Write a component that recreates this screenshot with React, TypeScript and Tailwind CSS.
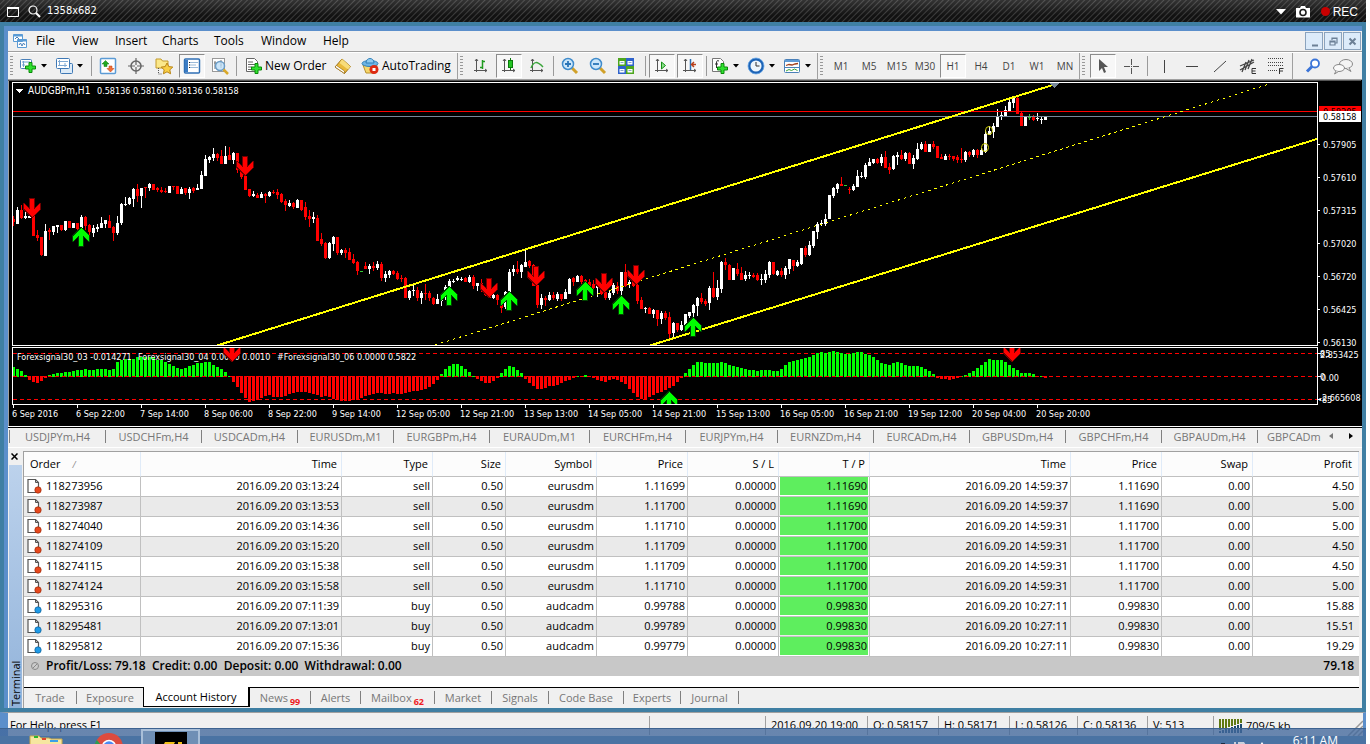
import React from "react";

type Kids = { children?: React.ReactNode };

/* ---------- chart data: [colour, high, body top, body bottom, low] ---------- */

const CANDLES = `
R216,219,222,226 W207,210,224,224 R205,210,218,219 W209,216,218,219 W212,216,218,218 R210,212,236,236 R230,235,238,241 R237,237,255,256
W224,231,256,256 R228,230,232,240 W226,226,232,235 W225,225,227,233 R225,225,230,231 W221,221,230,231 R221,221,228,228 W223,223,228,228
R223,223,229,230 W215,217,229,230 R216,217,226,230 R224,225,232,242 W225,228,233,237 W224,227,229,232 W217,223,228,228 W220,220,224,228
R215,221,228,228 R226,227,233,241 W216,223,233,235 W203,204,223,225 W197,204,205,206 W197,198,204,205 W188,189,199,207 R184,189,196,202
W188,188,196,208 R187,187,188,198 W183,184,188,191 R184,184,190,190 R187,188,190,192 R187,190,192,193 R188,191,192,193 W186,186,193,193
R186,186,187,190 R186,186,194,194 W187,189,194,194 R188,188,193,195 W187,189,193,199 R187,188,191,193 W184,188,190,190 W171,175,189,189
W155,159,176,176 W156,157,160,163 W148,154,158,161 R153,154,158,161 R150,156,164,164 W146,156,164,164 R147,155,160,160 W152,153,160,164
R153,153,170,173 R165,168,177,179 R175,176,190,190 R189,189,196,197 W191,194,196,197 R193,195,198,198 W192,194,198,198 R193,194,196,203
W191,192,196,197 R190,192,193,194 R189,192,195,199 R193,194,202,203 R199,201,205,211 W200,203,206,207 R202,203,207,209 W199,200,208,208
R200,200,210,211 R202,207,217,220 R210,216,219,227 W212,217,219,223 R215,218,241,241 R233,239,244,246 R242,243,258,259 W242,243,258,259
W236,237,244,251 R237,237,253,255 W249,250,253,255 R248,250,253,258 R248,252,260,260 R254,259,263,264 R261,262,271,275 G271,271,272,272
R262,266,269,269 W264,266,269,274 R262,266,268,271 W261,264,268,270 R262,264,278,281 W271,274,278,282 W270,271,275,278 R270,271,274,275
R271,273,279,280 R275,278,279,282 R277,278,298,298 W290,291,298,300 W283,290,291,296 R287,290,298,301 W291,293,298,304 R284,293,294,300
R291,293,298,301 R297,298,304,305 W294,299,304,304 W294,296,301,306 W285,287,297,300 W279,281,288,288 W279,281,282,283 W276,278,280,281
W277,279,280,281 R277,278,282,282 W275,277,282,283 R275,277,286,289 W283,283,286,291 R279,283,290,292 R288,289,295,296 R292,293,298,298
W294,295,298,299 R294,295,300,305 R298,299,308,313 W291,292,307,309 W269,272,300,300 W265,269,272,276 R261,269,272,274 W264,265,272,278
W250,262,267,267 R260,261,266,268 R264,265,286,286 R285,285,305,308 W294,298,305,309 R296,298,300,306 W292,295,300,301 R292,295,298,300
W292,294,299,301 R294,294,299,301 W289,292,299,299 W278,279,294,294 R277,278,282,286 W275,276,282,282 R275,276,282,284 R279,280,287,288
R279,282,286,290 R280,284,288,290 W283,284,288,297 R284,284,294,295 R289,292,298,300 W291,293,298,300 W283,285,293,295 R282,286,291,294
W272,272,291,297 R264,272,286,287 W280,282,284,288 R280,281,286,287 R283,285,301,304 R297,300,309,309 W307,308,309,313 R307,308,314,314
W309,310,314,318 R310,310,319,326 W311,313,319,324 R311,313,318,320 R312,317,334,338 W322,323,333,338 R323,323,330,332 W321,325,330,331
W314,314,325,326 W312,312,316,318 W304,305,313,325 W297,298,306,316 R293,298,302,304 R299,301,304,306 W286,288,303,310 R272,288,297,298
W280,288,297,300 W261,262,289,293 R258,262,265,270 R264,265,280,280 W268,268,280,280 R263,269,274,276 R267,273,280,280 W271,275,279,281
W272,275,276,279 R273,275,277,278 R273,275,280,281 W274,279,280,285 W270,274,280,283 W261,262,275,278 R262,262,274,275 W270,271,275,276
R268,271,275,277 W266,268,275,279 W259,259,269,274 R260,260,266,271 W260,262,266,267 W248,248,264,265 R246,248,255,257 W241,245,255,256
W231,231,246,248 W222,224,232,239 W220,223,224,226 W214,219,224,226 W195,195,219,219 W187,188,196,198 W183,184,189,193 R177,184,186,186
G185,185,186,186 R187,189,190,194 W184,186,190,191 W170,176,187,187 W172,176,177,178 W163,165,177,179 W158,162,166,166 W159,159,163,164
R158,159,163,164 W154,157,163,166 R151,157,168,168 R163,167,170,174 W155,156,169,170 W152,155,157,165 R150,155,159,160 W152,153,159,161
R152,153,164,164 W155,158,164,169 W143,149,159,160 W142,144,149,150 R141,144,152,152 W144,144,152,152 R141,144,147,149 R146,146,158,158
R154,157,159,159 W154,156,160,160 R154,156,157,160 R156,156,159,161 R155,157,160,163 R148,159,160,163 W151,152,160,162 R151,152,155,157
W149,150,155,157 R149,150,155,158 W148,150,155,155 W130,134,152,153 W126,131,135,135 W123,126,132,138 W109,116,127,127 W111,115,116,120
W106,110,116,116 W100,102,111,112 W96,98,103,108 R96,98,114,114 R112,113,126,126 W116,117,126,126 G114,117,118,120 R115,116,120,121
W113,118,119,121 W117,119,120,124 W116,116,120,120`
  .trim()
  .split(/\s+/)
  .map((s) => ({ c: s[0], v: s.slice(1).split(",").map(Number) }));

const BARS = [
  10, 8, 6, 2, -3, -5, -6, -4, -1, 2, 3, 4, 4, 5, 5, 6, 7, 7, 8, 7, 7, 8, 8, 8, 7, 8, 15, 17, 18, 18, 18, 20, 20, 20, 20, 20, 17, 17, 15,
  13, 11, 9, 8, 9, 11, 12, 14, 14, 15, 15, 12, 10, 8, 5, 1, -5, -10, -16, -21, -25, -24, -23, -21, -19, -18, -20, -20, -20, -19, -17, -16,
  -15, -15, -15, -16, -17, -18, -20, -19, -20, -22, -23, -24, -24, -24, -23, -22, -21, -19, -18, -17, -16, -16, -17, -17, -16, -17, -17,
  -16, -15, -14, -14, -13, -12, -10, -7, -3, 3, 8, 11, 13, 13, 11, 8, 5, 1, -2, -4, -6, -6, -4, -1, 4, 8, 11, 10, 7, 4, -2, -6, -9, -12,
  -12, -11, -9, -9, -8, -6, -4, -3, -1, 1, 1, 2, 1, -1, -3, -4, -5, -3, -2, -3, -5, -7, -12, -16, -20, -22, -23, -20, -18, -16, -15, -13,
  -11, -9, -5, -1, 4, 8, 12, 15, 15, 14, 14, 14, 14, 15, 14, 12, 11, 10, 9, 8, 7, 7, 6, 7, 7, 7, 6, 6, 8, 12, 15, 16, 17, 18, 19, 20, 22,
  24, 25, 24, 25, 26, 25, 24, 23, 23, 24, 25, 25, 23, 22, 20, 17, 14, 13, 12, 14, 15, 14, 12, 11, 11, 11, 10, 8, 6, 3, -1, -2, -2, -3, -2,
  -1, 1, 2, 4, 6, 9, 12, 15, 18, 17, 17, 17, 15, 12, 9, 7, 4, 4, 4, 3, 1, 1, -1,
];

const INK: Record<string, string> = { R: "#ff0000", W: "#ffffff", G: "#32cd32" };

const DATES = [
  "6 Sep 2016", "6 Sep 22:00", "7 Sep 14:00", "8 Sep 06:00", "8 Sep 22:00", "9 Sep 14:00", "12 Sep 05:00", "12 Sep 21:00", "13 Sep 13:00",
  "14 Sep 05:00", "14 Sep 21:00", "15 Sep 13:00", "16 Sep 05:00", "16 Sep 21:00", "19 Sep 12:00", "20 Sep 04:00", "20 Sep 20:00",
];
const PRICES = ["0.57905", "0.57610", "0.57315", "0.57020", "0.56720", "0.56425", "0.56130"];

function Arrow({ x, y, up }: { x: number; y: number; up?: boolean }) {
  const d = "M0 0L8 8V13L2 7.500V18H-2V7.500L-8 13V8Z";
  return (
    <path
      d={d}
      transform={up ? `translate(${x} ${y})` : `translate(${x} ${y + 18}) scale(1 -1)`}
      fill={up ? "#00ff00" : "#ff0000"}
      stroke={up ? "#004000" : "#700000"}
      strokeWidth="1.500"
      paintOrder="stroke"
    />
  );
}

function Chart() {
  return (
    <svg width="1353" height="346" viewBox="8 80 1353 346" shapeRendering="crispEdges" className="block shrink-0" fontFamily="'DejaVu Sans Condensed','DejaVu Sans',sans-serif" fontSize="9" fill="#fff" role="img" aria-label="AUDGBPm H1 price chart">
      <defs>
        <clipPath id="main"><rect x="13" y="83" width="1304" height="262" /></clipPath>
        <clipPath id="sub"><rect x="13" y="348" width="1304" height="56" /></clipPath>
      </defs>
      <rect x="8" y="80" width="1353" height="346" fill="#000" />
      <rect x="8" y="80" width="1" height="346" fill="#a0a0a0" />
      <rect x="8" y="80" width="1353" height="1" fill="#555" />
      <g clipPath="url(#main)">
        {CANDLES.map(({ c, v }, i) => {
          const x = 13 + 4 * i;
          return (
            <g key={i} fill={INK[c]}>
              <rect x={x} y={v[0]} width="1" height={Math.max(1, v[3] - v[0])} />
              <rect x={x - 1} y={v[1]} width="3" height={Math.max(1, v[2] - v[1])} />
            </g>
          );
        })}
        <rect x="13" y="111" width="1304" height="1" fill="#ff0000" />
        <rect x="13" y="116" width="1304" height="1" fill="#778899" />
        <path d="M217 345.500L1056 84" stroke="#ffff00" strokeWidth="2" />
        <path d="M650 345.500L1317 139" stroke="#ffff00" strokeWidth="2" />
        <path d="M435 345L1271 83.500" stroke="#ffff00" strokeWidth="1" strokeDasharray="2.500 3.800" />
        <path d="M1049 83h11l-5.500 5z" fill="#778899" />
        <g fill="none" stroke="#c8c800" strokeWidth="1" shapeRendering="auto">
          <ellipse cx="989" cy="130.500" rx="3.500" ry="4" />
          <ellipse cx="985" cy="147.500" rx="3.500" ry="4" />
        </g>
        <Arrow x={32} y={199} />
        <Arrow x={245} y={157} />
        <Arrow x={489} y={279} />
        <Arrow x={536} y={267} />
        <Arrow x={604} y={274} />
        <Arrow x={636} y={266} />
        <Arrow x={81} y={228} up />
        <Arrow x={449} y={287} up />
        <Arrow x={509} y={292} up />
        <Arrow x={585} y={282} up />
        <Arrow x={621} y={296} up />
        <Arrow x={693} y={318} up />
      </g>
      <g clipPath="url(#sub)">
        <path d="M13 353.500H1317M13 399.500H1317" stroke="#ff0000" strokeDasharray="4 3" />
        {BARS.map((v, i) => (
          <rect key={i} x={12 + 4 * i} y={v > 0 ? 377 - v : 376} width="3" height={Math.abs(v) + (v > 0 ? 0 : 1)} fill={v > 0 ? "#00ff00" : "#ff0000"} />
        ))}
        <path d="M13 376.500H1317" stroke="#ff0000" strokeDasharray="4 3" />
        <text x="17" y="360">Forexsignal30_03 -0.014271</text>
        <text x="138" y="360">Forexsignal30_04 0.0000 0.0010</text>
        <text x="277" y="360">#Forexsignal30_06 0.0000 0.5822</text>
        <Arrow x={232} y={343} />
        <Arrow x={1012} y={343} />
        <Arrow x={669} y={392} up />
      </g>
      <path d="M12.500 82.500H1317.500V345.500H12.500ZM12.500 347.500H1317.500V404.500H12.500Z" fill="none" stroke="#fff" />
      <path d="M16 89h7l-3.500 4z" />
      <text x="28" y="94" fontSize="10">AUDGBPm,H1</text>
      <text x="97" y="94">0.58136 0.58160 0.58136 0.58158</text>
      {PRICES.map((p, i) => (
        <g key={p}>
          <rect x="1318" y={144 + 33 * i} width="2" height="1" />
          <text x="1323" y={148 + 33 * i}>{p}</text>
        </g>
      ))}
      <rect x="1319" y="106" width="42" height="6" fill="#ff0000" />
      <text x="1323" y="115" fill="#000">0.58205</text>
      <rect x="1319" y="111" width="42" height="11" />
      <text x="1323" y="120" fill="#000">0.58158</text>
      <path d="M1318 353.500h3M1318 376.500h3M1318 399.500h3" stroke="#fff" />
      <text x="1320" y="357">85</text>
      <text x="1320" y="358">2.853425</text>
      <text x="1320" y="380">0</text>
      <text x="1321" y="381">0.00</text>
      <text x="1319" y="401">-2.665608</text>
      <text x="1319" y="403">-85</text>
      {DATES.map((d, i) => (
        <g key={d}>
          <rect x={13 + 64 * i} y="405" width="1" height="3" />
          <text x={12 + 64 * i} y="417">{d}</text>
        </g>
      ))}
    </svg>
  );
}

/* ---------- toolbar ---------- */

function Icon({ children, w = 18 }: Kids & { w?: number }) {
  return <svg width={w} height="18" viewBox={`0 0 ${w} 18`} fill="none" className="shrink-0" aria-hidden="true">{children}</svg>;
}
const Plus = ({ x = 6, y = 7 }: { x?: number; y?: number }) => (
  <path transform={`translate(${x} ${y})`} d="M4 .5h3v3.500h3.500v3H7v3.500H4V7H.5V4H4z" fill="#2fe02f" stroke="#0a8a0a" />
);
const Axes = () => <path d="M4.500 2v13M2 13.500h13M3 4l1.500-2L6 4M13 12l2 1.500-2 1.500" stroke="#555" />;

function Tool({ label, on, children }: Kids & { label: string; on?: boolean }) {
  return (
    <button
      aria-label={label}
      className={
        on
          ? "mx-px flex h-6 w-[26px] shrink-0 items-center justify-center border border-t-[#8c8c8c] border-l-[#8c8c8c] border-r-white border-b-white bg-[#f7f7f7] text-[10px] text-[#444]"
          : "flex h-6 w-7 shrink-0 items-center justify-center text-[10px] text-[#444]"
      }
    >
      {children}
    </button>
  );
}
function Combo({ label, children }: Kids & { label: string }) {
  return (
    <button aria-label={label} className="flex h-6 w-9 shrink-0 items-center gap-1 pl-[2px]">
      {children}
      <svg width="6" height="4" viewBox="0 0 6 4" aria-hidden="true"><path d="M0 0h6L3 3.500z" fill="#000" /></svg>
    </button>
  );
}
const Sep = () => <div className="mx-[2px] h-5 w-px shrink-0 bg-[#9a9a9a]" />;
const Grip = () => (
  <div className="ml-[2px] mr-1 h-5 w-[3px] shrink-0 bg-[repeating-linear-gradient(180deg,#999_0px,#999_1px,#f0f0f0_1px,#f0f0f0_3px)]" />
);
const Band = ({ children }: Kids) => <div className="flex h-full shrink-0 items-center border-l border-[#a0a0a0] first:border-l-0">{children}</div>;

function Toolbar() {
  return (
    <div className="flex h-[27px] items-center overflow-hidden border-t border-white bg-[#f0f0f0] text-[12px] text-black">
      <Band>
        <Grip />
        <Combo label="New chart">
          <Icon><rect x="1.500" y="2.500" width="11" height="9" rx="1" fill="#fff" stroke="#4a80b8" /><path d="M3 5h8M4.500 4v6M3 8h3" stroke="#6fa0d0" /><Plus x={6} y={5} /></Icon>
        </Combo>
        <Combo label="Profiles">
          <Icon><rect x="5.500" y="6.500" width="12" height="10" rx="1" fill="#dcebf8" stroke="#3f78b5" /><rect x="1.500" y="1.500" width="13" height="10" rx="1" fill="#fff" stroke="#3f78b5" /><path d="M3 4.500h10M4.500 3v6M3 8.500h9M10 10V6" stroke="#7fa9d3" /></Icon>
        </Combo>
        <Sep />
        <Tool label="Market Watch">
          <Icon><rect x="1.500" y="1.500" width="15" height="15" rx="1" fill="#fff" stroke="#5b9bd5" strokeWidth="1.500" /><path d="M6.500 3.500L10 7H8v2.500H5V7H3z" fill="#22a822" stroke="#0f7a0f" strokeWidth=".5" /><path d="M11.500 15L8 11.500h2V9h3v2.500h2z" fill="#f0703a" stroke="#c03c0c" strokeWidth=".5" /></Icon>
        </Tool>
        <Tool label="Data Window">
          <Icon><circle cx="9" cy="9" r="5" stroke="#666" strokeWidth="1.500" /><path d="M9 1v7M9 10v7M1 9h7M10 9h7" stroke="#666" strokeWidth="1.200" /></Icon>
        </Tool>
        <Tool label="Favourites">
          <Icon><path d="M1 2h5l1.500 2H13v7H1z" fill="#fbe88a" stroke="#c39a2b" /><path d="M3.500 11v6h3" stroke="#555" strokeDasharray="1 1" /><path d="M12 6l1.800 3.600 4 .5-3 2.700.8 4-3.600-2-3.600 2 .8-4-3-2.700 4-.5z" fill="#f9cf45" stroke="#b98516" /></Icon>
        </Tool>
        <Tool label="Navigator" on>
          <Icon><rect x="1.500" y="2" width="15" height="14" rx="1" fill="#fff" stroke="#2f6fb5" strokeWidth="1.500" /><path d="M3.500 3v12" stroke="#3a7cc4" strokeWidth="3" /><path d="M7 5.500h8M7 8h6M7 10.500h8" stroke="#9bbad8" /><path d="M6 5.500h1M6 8h1M6 10.500h1" stroke="#222" /></Icon>
        </Tool>
        <Tool label="Strategy Tester">
          <Icon><rect x="1.500" y="1.500" width="12" height="13" fill="#fff" stroke="#999" /><path d="M4 4v8M10 3v8M3 6h2M9 8h2" stroke="#777" /><circle cx="9" cy="9" r="4.500" fill="#bfe0f7" fillOpacity=".8" stroke="#6b9cc6" strokeWidth="1.500" /><path d="M12.500 12.500L17 17" stroke="#d9a92a" strokeWidth="2.500" /></Icon>
        </Tool>
        <Sep />
        <button className="flex h-6 w-[90px] shrink-0 items-center gap-[2px] whitespace-nowrap pl-[6px]">
          <Icon><path d="M1.500 1.500h8l3 3v10h-11z" fill="#fff" stroke="#666" /><path d="M3 5h5M3 7.500h7M3 10h4M3 12.500h3" stroke="#666" /><Plus x={6} y={6} /></Icon>
          New Order
        </button>
        <Tool label="MetaEditor">
          <Icon><path d="M8 2l8.500 7.500-6 7L1 10z" fill="#e9b93a" stroke="#9c6f12" /><path d="M8 2l8.500 7.500-2.500 3L5.500 6z" fill="#f8dc7a" /><path d="M1 10l9.500 6.500V14L2.500 8.500z" fill="#fff" stroke="#9c6f12" strokeWidth=".7" /></Icon>
        </Tool>
        <button className="flex h-6 w-[100px] shrink-0 items-center gap-[3px] whitespace-nowrap pl-1">
          <Icon><path d="M2 8h14l-3 8H5z" fill="#f5d76b" stroke="#b8902c" /><ellipse cx="9" cy="6.500" rx="8" ry="3" fill="#6db4e4" stroke="#2f7fb8" /><path d="M5 6c0-6 8-6 8 0z" fill="#8fcbf0" stroke="#2f7fb8" /><circle cx="13" cy="12.500" r="4.500" fill="#dd2a12" /><rect x="11.500" y="11" width="3" height="3" fill="#fff" /></Icon>
          AutoTrading
        </button>
      </Band>
      <Band>
        <Grip />
        <Tool label="Bar chart"><Icon><Axes /><path d="M10.500 3v9M8 10.500h2.500M10.500 4.500H13" stroke="#1f9a1f" strokeWidth="1.500" /></Icon></Tool>
        <Tool label="Candlesticks" on><Icon><Axes /><path d="M10.500 1v12" stroke="#0b7a0b" /><rect x="8.500" y="3.500" width="4" height="7" fill="#23c423" stroke="#0b7a0b" /></Icon></Tool>
        <Tool label="Line chart"><Icon><Axes /><path d="M3 11C6 4 9 4 15 10" stroke="#3aa53a" strokeWidth="1.500" /></Icon></Tool>
        <Sep />
        <Tool label="Zoom in"><Icon><path d="M11 11l5 5" stroke="#d1a12a" strokeWidth="3" /><circle cx="7" cy="7" r="5.500" fill="#cde7fa" stroke="#3f8bcb" strokeWidth="1.500" /><path d="M7 4v6M4 7h6" stroke="#2a75b8" strokeWidth="1.800" /></Icon></Tool>
        <Tool label="Zoom out"><Icon><path d="M11 11l5 5" stroke="#d1a12a" strokeWidth="3" /><circle cx="7" cy="7" r="5.500" fill="#cde7fa" stroke="#3f8bcb" strokeWidth="1.500" /><path d="M4 7h6" stroke="#2a75b8" strokeWidth="1.800" /></Icon></Tool>
        <Tool label="Tile windows"><Icon><path d="M1 1h8v8H1zM9 9h8v8H9z" fill="#4da61e" /><path d="M9 1h8v8H9zM1 9h8v8H1z" fill="#2f63cc" /><path d="M2.500 4h5v3.500h-5zM10.500 12h5v3.500h-5zM10.500 4h5v3.500h-5zM2.500 12h5v3.500h-5z" fill="#fff" /><path d="M3.500 5.500h3M11.500 5.500h3M3.500 13.500h3M11.500 13.500h3" stroke="#8aa8c8" /></Icon></Tool>
        <div className="w-[3px]" />
        <Sep />
        <Tool label="Auto scroll" on><Icon><Axes /><path d="M8.500 5v7l4-3.500z" fill="#8be08b" stroke="#179017" /></Icon></Tool>
        <Tool label="Chart shift" on><Icon><Axes /><path d="M9.500 2v11" stroke="#2a6fb0" strokeWidth="1.500" /><path d="M15 7.500h-4M13 5l-2.500 2.500L13 10" stroke="#b8401a" strokeWidth="1.500" /></Icon></Tool>
        <Sep />
        <Combo label="Indicators"><Icon><path d="M1.500 1.500h8l3 3v10h-11z" fill="#fff" stroke="#777" /><path d="M8 4c-2-1-2.500 0-2.500 2v5M4 7h3" stroke="#333" /><Plus x={6} y={6} /></Icon></Combo>
        <Combo label="Periods"><Icon><circle cx="9" cy="9" r="6.800" fill="#eef6fd" stroke="#1d63b5" strokeWidth="2.500" /><circle cx="9" cy="9" r="8" stroke="#6aa8e8" strokeWidth=".8" /><path d="M9 5v4h3.500" stroke="#333" /></Icon></Combo>
        <Combo label="Templates"><Icon><rect x="1.500" y="2.500" width="15" height="13" rx="1" fill="#fff" stroke="#4a80b8" /><path d="M2 4h14" stroke="#5f9bd6" strokeWidth="2" /><path d="M3 8.500l3-1 3 .5 3-1 3-.5" stroke="#a3401c" strokeWidth="1.300" /><path d="M2 10.500h14" stroke="#4a80b8" /><path d="M3 14l3-1.500 2.500 1 3-1.500 3 1.500" stroke="#3aa53a" /></Icon></Combo>
      </Band>
      <Band>
        <Grip />
        {["M1", "M5", "M15", "M30", "H1", "H4", "D1", "W1", "MN"].map((t) => (
          <Tool key={t} label={t} on={t === "H1"}>{t}</Tool>
        ))}
      </Band>
      <Band>
        <Grip />
        <Tool label="Cursor" on><Icon><path d="M5 2v12l3-3 2 5 2-1-2-5h4z" fill="#555" /></Icon></Tool>
        <Tool label="Crosshair"><Icon><path d="M9.500 2v6M9.500 11v6M2 9.500h6M11 9.500h6M9.500 9v1" stroke="#555" /></Icon></Tool>
        <Sep />
        <Tool label="Vertical line"><Icon><path d="M9.500 3v13" stroke="#444" /></Icon></Tool>
        <Tool label="Horizontal line"><Icon><path d="M3 9.500h12" stroke="#444" /></Icon></Tool>
        <Tool label="Trendline"><Icon><path d="M3 15L15 4" stroke="#444" /></Icon></Tool>
        <Tool label="Equidistant channel"><Icon><path d="M1 13L15 5M1 9l14-6M3 15L7 5M6 13l4-10M9 12l4-10" stroke="#444" strokeWidth="1.300" /><path d="M17 11.500h-4v5h4M13 14h3.500" stroke="#333" /></Icon></Tool>
        <Tool label="Fibonacci retracement"><Icon><path d="M1 1.500h15M1 5.500h15M1 8.500h15M1 13.500h10" stroke="#444" strokeDasharray="1 1" /><path d="M16.500 11.500h-4v5.500M12.500 14h3.500" stroke="#333" /></Icon></Tool>
        <div className="w-[2px]" />
      </Band>
      <Band>
        <div className="w-[6px]" />
        <Tool label="Search"><Icon><circle cx="11" cy="6.500" r="4" fill="#fff" stroke="#3a74d8" strokeWidth="1.800" /><path d="M8 9.500l-5 5" stroke="#3a74d8" strokeWidth="3" /></Icon></Tool>
        <button aria-label="Messages" className="flex h-6 w-8 items-center justify-center">
          <Icon w={22}><ellipse cx="14" cy="7" rx="6.500" ry="4.500" fill="#f4f4f4" stroke="#888" /><path d="M17 11l2 3.500-5-3" fill="#f4f4f4" stroke="#888" /><ellipse cx="7" cy="11" rx="5.500" ry="3.500" fill="#fafafa" stroke="#888" /><path d="M4 14l-1.500 3 4-2.500" fill="#fafafa" stroke="#888" /></Icon>
        </button>
      </Band>
    </div>
  );
}

/* ---------- terminal ---------- */

const HEAD = ["Order", "Time", "Type", "Size", "Symbol", "Price", "S / L", "T / P", "Time", "Price", "Swap", "Profit"];
const ROWS = [
  ["118273956", "2016.09.20 03:13:24", "sell", "0.50", "eurusdm", "1.11699", "0.00000", "1.11690", "2016.09.20 14:59:37", "1.11690", "0.00", "4.50"],
  ["118273987", "2016.09.20 03:13:53", "sell", "0.50", "eurusdm", "1.11700", "0.00000", "1.11690", "2016.09.20 14:59:37", "1.11690", "0.00", "5.00"],
  ["118274040", "2016.09.20 03:14:36", "sell", "0.50", "eurusdm", "1.11710", "0.00000", "1.11700", "2016.09.20 14:59:31", "1.11700", "0.00", "5.00"],
  ["118274109", "2016.09.20 03:15:20", "sell", "0.50", "eurusdm", "1.11709", "0.00000", "1.11700", "2016.09.20 14:59:31", "1.11700", "0.00", "4.50"],
  ["118274115", "2016.09.20 03:15:38", "sell", "0.50", "eurusdm", "1.11709", "0.00000", "1.11700", "2016.09.20 14:59:31", "1.11700", "0.00", "4.50"],
  ["118274124", "2016.09.20 03:15:58", "sell", "0.50", "eurusdm", "1.11710", "0.00000", "1.11700", "2016.09.20 14:59:31", "1.11700", "0.00", "5.00"],
  ["118295316", "2016.09.20 07:11:39", "buy", "0.50", "audcadm", "0.99788", "0.00000", "0.99830", "2016.09.20 10:27:11", "0.99830", "0.00", "15.88"],
  ["118295481", "2016.09.20 07:13:01", "buy", "0.50", "audcadm", "0.99789", "0.00000", "0.99830", "2016.09.20 10:27:11", "0.99830", "0.00", "15.51"],
  ["118295812", "2016.09.20 07:15:36", "buy", "0.50", "audcadm", "0.99779", "0.00000", "0.99830", "2016.09.20 10:27:11", "0.99830", "0.00", "19.29"],
];
const COLS = ["w-[117px]", "w-[201px]", "w-[91px]", "w-[73px]", "w-[91px]", "w-[91px]", "w-[91px]", "w-[91px]", "w-[201px]", "w-[91px]", "w-[91px]", ""];

function History() {
  return (
    <table className="w-full table-fixed border-separate border-spacing-0 border-t border-[#a0a0a0] bg-white text-right text-[11px] leading-[18px]">
      <colgroup>{COLS.map((c, i) => <col key={i} className={c} />)}</colgroup>
      <thead>
        <tr className="h-[25px] text-[11px]">
          {HEAD.map((h, i) => (
            <th key={i} className={"border-b border-r border-b-[#c0c0c0] border-r-[#e0ebf8] bg-[#fcfcfc] p-0 font-normal " + (i === 0 ? "pl-[6px] text-left" : i === 11 ? "pr-[6px]" : "pr-1")}>
              {h}
              {i === 0 && <span className="ml-3 text-[9px] italic text-[#888]">/</span>}
            </th>
          ))}
        </tr>
      </thead>
      <tbody>
        {ROWS.map((r) => (
          <tr key={r[0]} className="h-5 even:bg-[#eaeaea]">
            {r.map((v, i) => (
              <td key={i} className="border-b border-r border-[#c0c0c0] p-0 pb-px last:border-r-0">
                {i === 0 ? (
                  <span className="flex items-center gap-1 pl-[3px]">
                    <svg width="15" height="16" viewBox="0 0 15 16" fill="none" aria-hidden="true">
                      <path d="M1 1.500h7.500l3 3v10H1z" fill="#fff" stroke="#555" strokeWidth="1.200" />
                      <path d="M8.500 1.500v3h3" stroke="#555" />
                      <circle cx="11" cy="12" r="3.200" className={r[2] === "sell" ? "fill-[#e8481c] stroke-[#9c2a08]" : "fill-[#1f9be8] stroke-[#0d5f96]"} strokeWidth=".7" />
                    </svg>
                    {v}
                  </span>
                ) : i === 7 ? (
                  <span className="mx-px block bg-[#5eee5e] pr-px">{v}</span>
                ) : (
                  <span className={i === 11 ? "block pr-[5px]" : "block pr-[2px]"}>{v}</span>
                )}
              </td>
            ))}
          </tr>
        ))}
      </tbody>
      <tfoot>
        <tr className="h-[19px] bg-[#c8c8c8] text-[12px] font-semibold leading-[18px]">
          <td colSpan={11} className="p-0 pb-px text-left">
            <span className="flex items-center gap-[6px] whitespace-pre pl-[6px]">
              <svg width="10" height="10" viewBox="0 0 10 10" aria-hidden="true"><circle cx="5" cy="5" r="3.500" fill="#ccc" stroke="#888" /><path d="M3 7l4-4" stroke="#888" /></svg>
              {"Profit/Loss: 79.18  Credit: 0.00  Deposit: 0.00  Withdrawal: 0.00"}
            </span>
          </td>
          <td className="p-0 pb-px pr-[5px]">79.18</td>
        </tr>
      </tfoot>
    </table>
  );
}

const TABS: [string, string, string?][] = [
  ["Trade", "w-[53px]"], ["Exposure", "w-[66px]"], ["Account History", "w-[106px]"], ["News", "w-[62px]", "99"], ["Alerts", "w-[50px]"], ["Mailbox", "w-[74px]", "62"],
  ["Market", "w-[57px]"], ["Signals", "w-[57px]"], ["Code Base", "w-[75px]"], ["Experts", "w-[57px]"], ["Journal", "w-[58px]"],
];

const SYMBOLS: [string, string][] = [
  ["USDJPYm,H4", "w-[97px]"], ["USDCHFm,H4", "w-24"], ["USDCADm,H4", "w-24"], ["EURUSDm,M1", "w-24"], ["EURGBPm,H4", "w-24"], ["EURAUDm,M1", "w-[100px]"],
  ["EURCHFm,H4", "w-24"], ["EURJPYm,H4", "w-[92px]"], ["EURNZDm,H4", "w-24"], ["EURCADm,H4", "w-24"], ["GBPUSDm,H4", "w-24"], ["GBPCHFm,H4", "w-24"], ["GBPAUDm,H4", "w-24"],
];

const MENU: [string, string][] = [
  ["File", "w-9"], ["View", "w-[43px]"], ["Insert", "w-[47px]"], ["Charts", "w-[52px]"], ["Tools", "w-[47px]"], ["Window", "w-[62px]"], ["Help", "w-9"],
];

const STATUS: [string, string][] = [
  ["", "w-[116px]"], ["2016.09.20 19:00", "w-[102px]"], ["O: 0.58157", "w-[71px]"], ["H: 0.58171", "w-[71px]"], ["L: 0.58126", "w-[68px]"], ["C: 0.58136", "w-[70px]"], ["V: 513", "w-[66px]"],
];

export default function App() {
  return (
    <div className="h-screen overflow-hidden bg-white pr-1 font-['Open_Sans','Noto_Sans',sans-serif] text-[11px] text-black">
      <div className="relative flex h-full flex-col overflow-hidden">
        <header className="flex h-[22px] shrink-0 items-center bg-[linear-gradient(180deg,rgba(255,255,255,.14),rgba(255,255,255,0)_70%),repeating-linear-gradient(135deg,#121212_0px,#121212_2px,#3a3a3a_3px,#121212_4px)] pl-[7px] pr-2 pt-px text-[12px] text-white">
          <svg width="12" height="10" viewBox="0 0 12 10" fill="none" aria-hidden="true"><path d="M.5 1h11v8.500H.5z" stroke="#fff" /><path d="M0 1h12" stroke="#fff" strokeWidth="2" /></svg>
          <svg className="ml-[9px]" width="13" height="13" viewBox="0 0 13 13" fill="none" aria-hidden="true"><circle cx="5" cy="5" r="4" stroke="#fff" strokeWidth="1.200" /><path d="M8 8l4 4" stroke="#fff" strokeWidth="2.200" /></svg>
          <span className="ml-[6px] font-['DejaVu_Sans_Condensed',sans-serif] text-[11px]">1358x682</span>
          <span className="flex-1" />
          <svg width="10" height="6" viewBox="0 0 10 6" aria-hidden="true"><path d="M0 0h10L5 5.500z" fill="#fff" /></svg>
          <svg className="ml-[10px]" width="14" height="12" viewBox="0 0 14 12" aria-hidden="true"><path d="M0 2h4l1-2h4l1 2h4v9.500H0z" fill="#fff" /><circle cx="7" cy="6.500" r="3" fill="#fff" stroke="#1c1c1c" strokeWidth="1.600" /></svg>
          <span className="ml-[11px] h-[9px] w-[9px] rounded-full bg-[#c80000]" />
          <span className="ml-[3px] font-['Liberation_Sans',sans-serif] text-[12px]">REC</span>
        </header>

        <div className="flex min-h-0 flex-1 flex-col border-4 border-[#3f7fa3] bg-[#5b8fcb] pl-1 pt-[5px]">
          <nav className="flex h-5 shrink-0 items-center bg-[#f0f0f0] pl-[5px] text-[12px]">
            <svg width="14" height="14" viewBox="0 0 14 14" fill="none" aria-hidden="true"><path d="M.5.5h9v7h-9zM4.500 5.500h9v8h-9z" fill="#fff" stroke="#5b9bd5" /><path d="M.5 1.500h9M4.500 6.500h9" stroke="#5b9bd5" strokeWidth="2" /><path d="M2 5l2-2 2 2M6 11l1.500-2L9 12l1.500-3 1.500 2" stroke="#4a80b8" /></svg>
            <div className="w-[9px]" />
            {MENU.map(([m, w]) => <button key={m} className={"shrink-0 text-left " + w}>{m}</button>)}
            <span className="flex-1" />
            {["M5 11.500h6", "M6 6V4h5v5H9M4 7h5v4H4zM4 8h5M6 4.500h5", "M4.500 4.500l6 6M10.500 4.500l-6 6"].map((d, i) => (
              <button key={d} aria-label={["Minimize", "Restore", "Close"][i]} className="mr-px flex h-[18px] w-[18px] shrink-0 items-center justify-center border border-[#8ba3bd] bg-[#dcebfa]">
                <svg width="15" height="15" viewBox="0 0 15 15" fill="none" aria-hidden="true"><path d={d} stroke="#6c8096" strokeWidth={i === 1 ? 1.2 : 2} /></svg>
              </button>
            ))}
          </nav>
          <div className="shrink-0 border-b border-t border-[#a0a0a0]"><Toolbar /></div>

          <div className="shrink-0 overflow-hidden bg-black"><Chart /></div>

          <div className="flex h-[22px] shrink-0 items-center overflow-hidden border-b border-t border-b-white border-t-white bg-[#f0f0f0] pb-[2px] pl-px text-[#777] shadow-[inset_0_1px_0_#000]">
            {SYMBOLS.map(([s, w], i) => (
              <button key={s} className={"h-[13px] shrink-0 border-r border-[#808080] leading-[13px] " + w + (i === 0 ? " border-l" : "")}>{s}</button>
            ))}
            <button className="shrink-0 pl-[9px] leading-[13px]">GBPCADm</button>
            <span className="flex-1" />
            <button aria-label="Scroll left" className="mr-4"><svg width="4" height="6" viewBox="0 0 4 6"><path d="M4 0v6L0 3z" fill="#777" /></svg></button>
            <button aria-label="Scroll right" className="mr-[9px]"><svg width="4" height="6" viewBox="0 0 4 6"><path d="M0 0v6l4-3z" fill="#000" /></svg></button>
          </div>

          <section className="flex min-h-0 flex-1 bg-[#f0f0f0] pt-[3px]">
            <div className="flex w-[15px] shrink-0 flex-col pl-px">
              <button aria-label="Close terminal" className="flex h-[14px] shrink-0 items-start pl-[2px] pt-[2px]"><svg width="7" height="7" viewBox="0 0 7 7"><path d="M.5.5l6 6M6.500.5l-6 6" stroke="#000" strokeWidth="1.500" /></svg></button>
              <div className="flex min-h-0 w-[13px] flex-1 items-center bg-linear-to-b from-[#bcd2ec] to-[#92b3da]">
                <span className="h-full rotate-180 pt-[2px] leading-[13px] [writing-mode:vertical-rl]">Terminal</span>
              </div>
            </div>
            <div className="mr-[3px] flex min-w-0 flex-1 flex-col border-l border-[#a0a0a0]">
              <History />
              <div className="flex-1 bg-white" />
              <div className="flex h-[21px] shrink-0 items-start border-t border-black text-[#777]">
                {TABS.map(([t, w, n]) =>
                  t === "Account History" ? (
                    <button key={t} className={"-mt-px h-5 shrink-0 border border-t-0 border-black bg-white leading-5 text-black shadow-[1px_0_0_#000] " + w}>{t}</button>
                  ) : (
                    <button key={t} className={"relative mt-[3px] flex h-[13px] shrink-0 items-center justify-center leading-[12px] " + w + (t === "Exposure" ? "" : " border-r border-[#808080]") + (t === "News" ? " pl-px" : "")}>
                      {t}
                      {n && <sub className="top-1 ml-[2px] text-[9px] font-bold leading-none text-[#ee1c24]">{n}</sub>}
                    </button>
                  )
                )}
              </div>
            </div>
          </section>
        </div>

        <footer className="flex h-8 shrink-0 items-start border-t border-[#a0a0a0] border-l-8 border-r-[3px] border-l-[#5b8fcb] border-r-[#5b8fcb] bg-[#f0f0f0] pt-[3px]">
          <span className="flex-1 whitespace-nowrap pl-[2px] leading-[18px]">For Help, press F1</span>
          {STATUS.map(([s, w]) => (
            <span key={w + s} className={"h-[19px] shrink-0 whitespace-nowrap border-l border-[#a0a0a0] pl-[5px] leading-[18px] " + w}>{s}</span>
          ))}
          <span className="flex h-[19px] w-[150px] shrink-0 items-center gap-1 border-l border-[#a0a0a0] pl-[5px]">
            <svg width="23" height="14" viewBox="0 0 23 14" aria-hidden="true">
              {Array.from({ length: 8 }, (_, i) => (
                <g key={i}><rect x={i * 3} y="0" width="2" height={11 - i} fill="#5f7a12" /><rect x={i * 3} y={12 - i} width="2" height={2 + i} fill="#1c4a6e" /></g>
              ))}
            </svg>
            <span className="flex-1 whitespace-nowrap leading-[18px]">709/5 kb</span>
            <svg width="16" height="16" viewBox="0 0 16 16" fill="none" className="mt-1" aria-hidden="true"><path d="M1 16L16 1M6 16L16 6M11 16l5-5" stroke="#999" strokeWidth="1.500" /></svg>
          </span>
        </footer>

        <div className="absolute inset-x-0 bottom-0 h-4 overflow-hidden border-t border-[#3d6390] bg-[linear-gradient(180deg,rgba(66,104,156,.78)_0px,rgba(66,104,156,.78)_7px,#4a73a3_7px)]">
          <div className="flex items-start">
            <svg className="ml-7 mt-[6px]" width="36" height="10" viewBox="0 0 36 10" aria-hidden="true"><path d="M2 1h9l2 2h8l2 1h11v6H2z" fill="#f6e6a0" stroke="#c9a94a" /><path d="M6 1h4v2H6z" fill="#2bb52b" /><path d="M14 3h4v2h-4z" fill="#e0452a" /><path d="M22 5h8v2h-8z" fill="#3aa0e8" /></svg>
            <svg className="ml-[30px] mt-1" width="30" height="11" viewBox="0 0 30 11" aria-hidden="true"><circle cx="15" cy="14" r="14" fill="#dd4b3e" /><path d="M3 7l7 9-9 2C0 13 1 9 3 7z" fill="#2e9e4f" /><circle cx="15" cy="14" r="6.500" fill="#4a8af4" stroke="#fff" strokeWidth="1.500" /></svg>
            <button aria-label="MetaTrader" className="ml-[17px] flex h-5 w-[59px] items-start justify-center border-2 border-[#a9bfd8] bg-[#6f8fb5] pt-px">
              <svg width="32" height="14" viewBox="0 0 32 14" aria-hidden="true"><path d="M0 0h32v14H0z" fill="#000" /><path d="M10 10h10l-2 4H8zM23 10h4v4h-4z" fill="#f0c018" /></svg>
            </button>
            <span className="flex-1" />
            <svg className="mr-[27px] mt-3" width="46" height="4" viewBox="0 0 46 4" aria-hidden="true"><path d="M1 2h4v2H1z" fill="#1d2c42" /><path d="M14 1h2v3h-2zM18 1h6l2 3h-8z" fill="#c8d0dc" /><path d="M42 1l2 3h-4z" fill="#fff" /></svg>
            <span className="mr-7 mt-1 whitespace-nowrap text-[12px] leading-4 text-white">6:11 AM</span>
          </div>
        </div>
      </div>
    </div>
  );
}
